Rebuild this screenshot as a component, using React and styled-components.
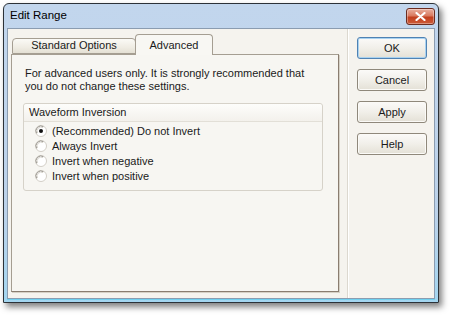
import React, { useState } from 'react'
import styled, { createGlobalStyle } from 'styled-components'

const GlobalStyle = createGlobalStyle`
  html, body {
    margin: 0;
    padding: 0;
    background: #ffffff;
  }
  body {
    font-family: "Liberation Sans", Arial, sans-serif;
    font-size: 11px;
    color: #1a1a1a;
  }
`

const options = [
  '(Recommended) Do not Invert',
  'Always Invert',
  'Invert when negative',
  'Invert when positive',
]

const RadioMark = ({ checked }) => (
  <svg width="12" height="12" viewBox="0 0 12 12">
    <circle cx="6" cy="6" r="5.5" fill="#ffffff" stroke="#d2cec6" />
    <path d="M1.6 8.4 A5 5 0 0 1 8.4 1.6" fill="none" stroke="#9a968f" strokeWidth="1" />
    <path d="M2.6 8 A4 4 0 0 1 8 2.6" fill="none" stroke="#dad7d0" strokeWidth="1" />
    {checked && <circle cx="6" cy="6" r="2" fill="#111" />}
  </svg>
)

const App = () => {
  const [choice, setChoice] = useState(0)

  return (
    <Page>
      <GlobalStyle />
      <Window>
        <TitleBar>
          <Title>Edit Range</Title>
          <CloseButton>
            <svg width="11" height="9" viewBox="0 0 11 9">
              <path d="M1.5 1 L9.5 8 M9.5 1 L1.5 8" stroke="#ffffff" strokeWidth="2.2" strokeLinecap="round" />
            </svg>
          </CloseButton>
        </TitleBar>
        <Client>
          <LeftPane>
            <TabStrip>
              <Tab $width={124}>Standard Options</Tab>
              <Tab $width={78} $active>Advanced</Tab>
            </TabStrip>
            <Panel>
              <Note>
                For advanced users only. It is strongly recommended that
                <br />
                you do not change these settings.
              </Note>
              <Group>
                <GroupHead>Waveform Inversion</GroupHead>
                <RadioList>
                  {options.map((label, i) => (
                    <RadioRow key={i} onClick={() => setChoice(i)}>
                      <RadioMark checked={choice === i} />
                      <span>{label}</span>
                    </RadioRow>
                  ))}
                </RadioList>
              </Group>
            </Panel>
          </LeftPane>
          <Divider />
          <RightPane>
            <Button $default>OK</Button>
            <Button>Cancel</Button>
            <Button>Apply</Button>
            <Button>Help</Button>
          </RightPane>
        </Client>
      </Window>
    </Page>
  )
}

export default App

const Page = styled.div`
  width: 452px;
  height: 316px;
  padding: 3px 0 0 3px;
  box-sizing: border-box;
`
const Window = styled.div`
  width: 436px;
  height: 300px;
  box-sizing: border-box;
  border: 1px solid #2c3238;
  border-radius: 6px 6px 0 0;
  background: linear-gradient(180deg, #c2d6ed 0%, #bcd2ea 70%, #a4d6f0 100%);
  box-shadow: 3px 4px 6px rgba(0, 0, 0, 0.5);
  display: flex;
  flex-direction: column;
`
const TitleBar = styled.div`
  height: 24px;
  display: flex;
  align-items: flex-start;
  justify-content: space-between;
  padding: 0 3px 0 6px;
`
const Title = styled.div`
  font-size: 11.5px;
  color: #000;
  margin-top: 5px;
`
const CloseButton = styled.div`
  width: 29px;
  height: 17px;
  box-sizing: border-box;
  margin-top: 4px;
  border: 1px solid #6b2c20;
  border-radius: 3px;
  background: linear-gradient(180deg, #e9b0a0 0%, #d97a60 45%, #c2401f 55%, #cc5a38 100%);
  box-shadow: inset 0 0 0 1px rgba(255, 255, 255, 0.35);
  display: flex;
  align-items: center;
  justify-content: center;
`
const Client = styled.div`
  flex: 1;
  margin: 0 3px 3px 3px;
  border: 1px solid #8b9cb0;
  background: #f5f3ee;
  display: flex;
  box-shadow: 0 1px 0 #6fd0ef;
`
const LeftPane = styled.div`
  width: 339px;
  box-sizing: border-box;
  padding: 4px 8px 6px 3px;
  display: flex;
  flex-direction: column;
`
const TabStrip = styled.div`
  display: flex;
  align-items: flex-end;
  padding-left: 1px;
  height: 21px;
  position: relative;
  z-index: 1;
`
const Tab = styled.div`
  width: ${p => p.$width}px;
  height: ${p => (p.$active ? 21 : 16)}px;
  box-sizing: border-box;
  margin-left: ${p => (p.$active ? -1 : 0)}px;
  margin-bottom: ${p => (p.$active ? -1 : 0)}px;
  border: 1px solid #a59e92;
  border-bottom: ${p => (p.$active ? 'none' : '1px solid #a59e92')};
  border-radius: 4px 4px 0 0;
  background: ${p =>
    p.$active
      ? '#f8f7f3'
      : 'linear-gradient(180deg, #fbfaf6 0%, #efece3 60%, #e4e0d4 100%)'};
  display: flex;
  justify-content: center;
  padding-top: ${p => (p.$active ? 4 : 0)}px;
`
const Panel = styled.div`
  flex: 1;
  border: 1px solid #a59e92;
  border-right-color: #8a7d70;
  border-bottom-color: #8a7d70;
  background: #f7f6f2;
  box-shadow: 1px 1px 0 #d6d1c6;
  padding: 12px 15px 0 11px;
`
const Note = styled.div`
  line-height: 13px;
  margin-left: 2px;
  margin-bottom: 10px;
`
const Group = styled.div`
  border: 1px solid #d6d2c9;
  border-radius: 3px;
  background: #f7f6f2;
`
const GroupHead = styled.div`
  height: 17px;
  line-height: 17px;
  padding-left: 5px;
  border-bottom: 1px solid #e2dfd7;
  background: linear-gradient(180deg, #fdfdfb 0%, #f3f1ec 100%);
  border-radius: 3px 3px 0 0;
`
const RadioList = styled.div`
  padding: 1px 0 7px 11px;
`
const RadioRow = styled.div`
  height: 15px;
  display: flex;
  align-items: center;
  gap: 5px;
  cursor: default;
`
const Divider = styled.div`
  width: 1px;
  background: #dcd8cf;
  box-shadow: 1px 0 0 #ffffff;
`
const RightPane = styled.div`
  flex: 1;
  padding: 8px 0 0 9px;
  display: flex;
  flex-direction: column;
  gap: 10px;
`
const Button = styled.div`
  width: 70px;
  height: 22px;
  box-sizing: border-box;
  border: 1px solid ${p => (p.$default ? '#4f82b3' : '#8f887b')};
  border-radius: 3px;
  background: linear-gradient(180deg, #fbfaf8 0%, #f1efe9 50%, #e4e0d6 100%);
  box-shadow: inset 0 0 0 1px ${p => (p.$default ? '#a9d2f0' : '#fbfaf7')};
  display: flex;
  align-items: center;
  justify-content: center;
`
